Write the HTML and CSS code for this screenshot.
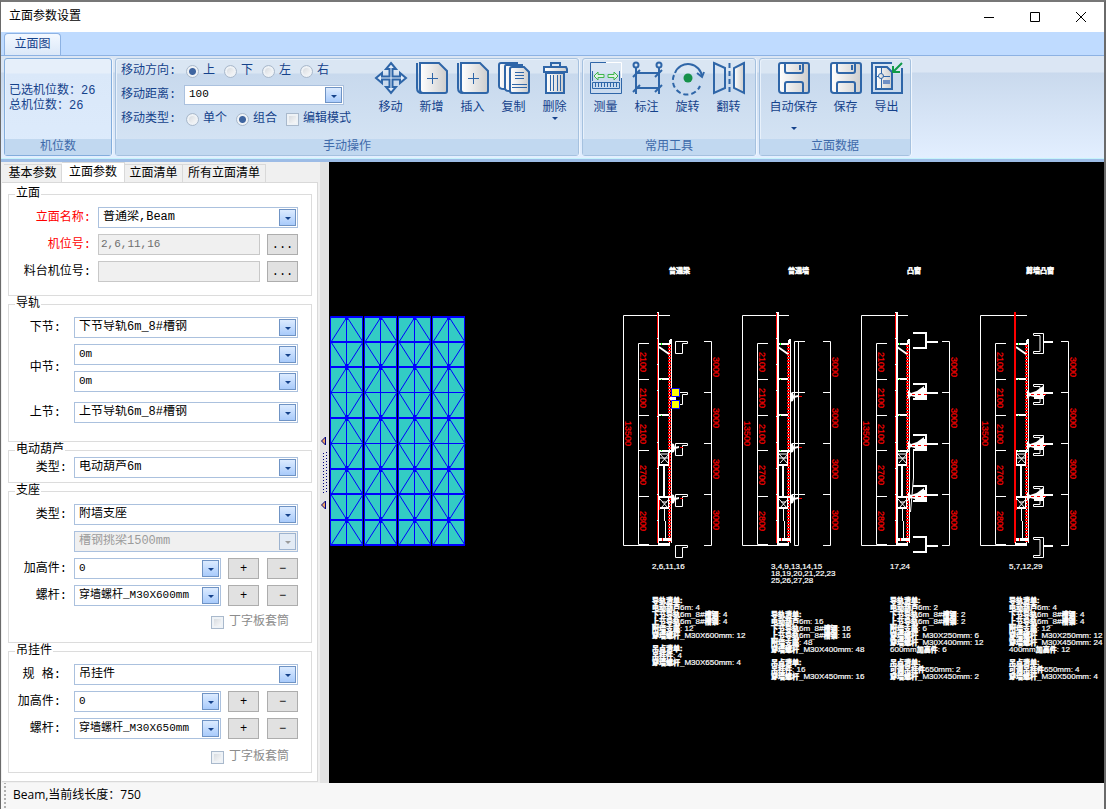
FILE: index.html
```html
<!DOCTYPE html>
<html lang="zh-CN">
<head>
<meta charset="utf-8">
<title>立面参数设置</title>
<link rel="stylesheet" href="styles.css">
</head>
<body>
<div class="window">
  <header class="titlebar">
    <h1 class="title">立面参数设置</h1>
    <div class="controls">
      <button class="control" type="button" aria-label="最小化"><svg width="12" height="12" viewBox="0 0 12 12"><path d="M1 6.500h10"/></svg></button>
      <button class="control" type="button" aria-label="最大化"><svg width="12" height="12" viewBox="0 0 12 12"><path d="M1.500 1.500h9v9h-9z"/></svg></button>
      <button class="control" type="button" aria-label="关闭"><svg width="12" height="12" viewBox="0 0 12 12"><path d="M1 1l10 10M11 1L1 11"/></svg></button>
    </div>
  </header>

  <nav class="ribbon-tabs"><button class="ribbon-tab" type="button">立面图</button></nav>

  <section class="ribbon">
    <div class="group group-count">
      <div class="group-body counts"><p>已选机位数：26</p><p>总机位数：26</p></div>
      <h2 class="caption">机位数</h2>
    </div>

    <div class="group group-manual">
      <div class="group-body">
        <div class="options">
          <div class="option-row" role="radiogroup" aria-label="移动方向">
            <span class="option-name">移动方向:</span>
            <label class="choice"><input type="radio" name="dir" checked>上</label>
            <label class="choice"><input type="radio" name="dir">下</label>
            <label class="choice"><input type="radio" name="dir">左</label>
            <label class="choice"><input type="radio" name="dir">右</label>
          </div>
          <div class="option-row">
            <label class="option-name" for="distance">移动距离:</label>
            <span class="combo combo-distance"><select id="distance" class="latin"><option>100</option></select></span>
          </div>
          <div class="option-row" role="radiogroup" aria-label="移动类型">
            <span class="option-name">移动类型:</span>
            <label class="choice"><input type="radio" name="kind">单个</label>
            <label class="choice"><input type="radio" name="kind" checked>组合</label>
            <label class="choice"><input type="checkbox">编辑模式</label>
          </div>
        </div>
        <div class="tools">
          <button class="tool" type="button">
            <svg class="icon" viewBox="0 0 32 32"><path class="fill" d="M16 1l5 6h-3.500v7.500H25V11l6 5-6 5v-3.500h-7.500V25H21l-5 6-5-6h3.500v-7.500H7V21l-6-5 6-5v3.500h7.500V7H11z"/></svg>移动</button>
          <button class="tool" type="button">
            <svg class="icon" viewBox="0 0 32 32"><use href="#page-plus"/></svg>新增</button>
          <button class="tool" type="button">
            <svg class="icon" viewBox="0 0 32 32"><use href="#page-plus"/></svg>插入</button>
          <button class="tool" type="button">
            <svg class="icon" viewBox="0 0 32 32"><path class="metal" d="M3 1h16v26H6q-5 0-5-3V3q0-2 2-2z"/><path class="metal" d="M8 3h16v26h-13q-4 0-4-3V5q0-2 1-2z"/><path class="metal" d="M14 5h12l5 5v19q0 2-2 2H14q-2 0-2-2V7q0-2 2-2z"/><path class="fine" d="M17 10.500h9M17 13.500h9M17 16.500h9M14 22.500h15M14 25.500h15"/></svg>复制</button>
          <button class="tool" type="button">
            <svg class="icon" viewBox="0 0 32 32"><path class="metal" d="M7 11h18v20H7z"/><path class="metal" d="M5 5h22l1 2v3H5V7z"/><path d="M12 5V1h9v4"/><path class="fine" d="M11.500 13v16M14.500 13v16M18.500 13v16M21.500 13v16"/></svg>删除<i class="drop"></i></button>
        </div>
      </div>
      <h2 class="caption">手动操作</h2>
    </div>

    <div class="group group-common">
      <div class="group-body">
        <div class="tools">
          <button class="tool" type="button">
            <svg class="icon" viewBox="0 0 32 32"><path class="fine" d="M16 .5H.500v31h31V16"/><path class="shine" d="M16 .5h15.500V16"/><path class="fine" d="M2.500 9v10M29.500 9v10"/><path class="green" d="M4 14l4-4v2.500h6v3H8V18zM28 14l-4-4v2.500h-6v3h6V18z"/><path class="band" d="M2.500 20.500h27v6h-27z"/><path class="fine" d="M5.500 21v4M8.500 21v4M11.500 21v4M14.500 21v4M17.500 21v4M20.500 21v4M23.500 21v4M26.500 21v4"/></svg>测量</button>
          <button class="tool" type="button">
            <svg class="icon" viewBox="0 0 32 32"><circle cx="5" cy="3" r="2.500"/><circle cx="28" cy="3" r="2.500"/><path d="M5 6v26M28 6v26M5 11h23M5 26h23M2 15l7-7M24 15l7-7M2 30l7-7M24 30l7-7"/></svg>标注</button>
          <button class="tool" type="button">
            <svg class="icon" viewBox="0 0 32 32"><path d="M3 11A14 14 0 0 1 30 15"/><path d="M25 11l5 4 2-5"/><path class="dashed" d="M2 13A14 14 0 0 0 28 24"/><circle class="dot" cx="16" cy="16" r="4.500"/></svg>旋转</button>
          <button class="tool" type="button">
            <svg class="icon" viewBox="0 0 32 32"><path d="M1 1l11 5v20L1 31z"/><path class="metal" d="M31 1L21 6v20l10 5z"/><path class="dashed" d="M16.500 1v30"/></svg>翻转</button>
        </div>
      </div>
      <h2 class="caption">常用工具</h2>
    </div>

    <div class="group group-data">
      <div class="group-body">
        <div class="tools">
          <button class="tool tool-wide" type="button">
            <svg class="icon" viewBox="0 0 32 32"><use href="#floppy"/></svg>自动保存<i class="drop drop-low"></i></button>
          <button class="tool" type="button">
            <svg class="icon" viewBox="0 0 32 32"><use href="#floppy"/></svg>保存</button>
          <button class="tool" type="button">
            <svg class="icon" viewBox="0 0 32 32"><path d="M21 1H1v30h30V6"/><path class="metal" d="M5 5h11l5 5v17H5z"/><path class="fine" d="M5 14.500h14M10.500 5v22"/><circle class="metal fine" cx="10" cy="14" r="2.500"/><path class="solid" d="M12 18h7v4h-7z"/><path class="arrow" d="M31 1l-9 9M22 4v6h7"/></svg>导出</button>
        </div>
      </div>
      <h2 class="caption">立面数据</h2>
    </div>
  </section>

  <main class="main">
    <aside class="sidebar">
      <div class="tabs" role="tablist">
        <button class="tab" type="button" role="tab">基本参数</button>
        <button class="tab tab-active" type="button" role="tab" aria-selected="true">立面参数</button>
        <button class="tab" type="button" role="tab">立面清单</button>
        <button class="tab tab-long" type="button" role="tab">所有立面清单</button>
      </div>
      <form class="page">
        <fieldset class="box box-facade">
          <legend>立面</legend>
          <div class="row"><label class="name required" for="facade">立面名称:</label><span class="combo"><select id="facade"><option>普通梁,Beam</option></select></span></div>
          <div class="row"><label class="name required" for="seat">机位号:</label><input id="seat" class="text latin" type="text" value="2,6,11,16" disabled><button class="small" type="button" aria-label="选择机位号">...</button></div>
          <div class="row"><label class="name" for="dock">料台机位号:</label><input id="dock" class="text latin" type="text" disabled><button class="small" type="button" aria-label="选择料台机位号">...</button></div>
        </fieldset>

        <fieldset class="box box-rail">
          <legend>导轨</legend>
          <div class="row"><label class="name" for="lower">下节:</label><span class="combo"><select id="lower"><option>下节导轨6m_8#槽钢</option></select></span></div>
          <div class="row row-tall"><label class="name" for="mid">中节:</label><div class="stack"><span class="combo"><select id="mid" class="latin"><option>0m</option></select></span><span class="combo"><select class="latin" aria-label="中节二"><option>0m</option></select></span></div></div>
          <div class="row"><label class="name" for="upper">上节:</label><span class="combo"><select id="upper"><option>上节导轨6m_8#槽钢</option></select></span></div>
        </fieldset>

        <fieldset class="box box-hoist">
          <legend>电动葫芦</legend>
          <div class="row"><label class="name" for="hoist">类型:</label><span class="combo"><select id="hoist"><option>电动葫芦6m</option></select></span></div>
        </fieldset>

        <fieldset class="box box-support">
          <legend>支座</legend>
          <div class="row"><label class="name" for="support">类型:</label><span class="combo"><select id="support"><option>附墙支座</option></select></span></div>
          <div class="row"><span class="name"></span><span class="combo combo-off"><select aria-label="挑梁" disabled><option>槽钢挑梁1500mm</option></select></span></div>
          <div class="row"><label class="name" for="raise1">加高件:</label><span class="combo"><select id="raise1" class="latin"><option>0</option></select></span><button class="small" type="button">+</button><button class="small" type="button">−</button></div>
          <div class="row"><label class="name" for="screw1">螺杆:</label><span class="combo"><select id="screw1" class="latin"><option>穿墙螺杆_M30X600mm</option></select></span><button class="small" type="button">+</button><button class="small" type="button">−</button></div>
          <label class="sleeve"><input type="checkbox" disabled>丁字板套筒</label>
        </fieldset>

        <fieldset class="box box-hanger">
          <legend>吊挂件</legend>
          <div class="row"><label class="name" for="hanger">规&nbsp;格:</label><span class="combo"><select id="hanger"><option>吊挂件</option></select></span></div>
          <div class="row"><label class="name" for="raise2">加高件:</label><span class="combo"><select id="raise2" class="latin"><option>0</option></select></span><button class="small" type="button">+</button><button class="small" type="button">−</button></div>
          <div class="row"><label class="name" for="screw2">螺杆:</label><span class="combo"><select id="screw2" class="latin"><option>穿墙螺杆_M30X650mm</option></select></span><button class="small" type="button">+</button><button class="small" type="button">−</button></div>
          <label class="sleeve sleeve-low"><input type="checkbox" disabled>丁字板套筒</label>
        </fieldset>
      </form>
    </aside>

    <div class="splitter">
      <svg width="9" height="80" viewBox="0 0 9 80"><path class="tip" d="M5.500 4v8L1.500 8zM5.500 68v8L1.500 72z"/><path class="grip" d="M3.500 20v42M6.500 19v42"/></svg>
    </div>

    <div class="canvas">
      <svg class="drawing" viewBox="329 162 775 620" preserveAspectRatio="xMinYMin meet">
        <defs>
          <g id="panel">
            <path class="teal" d="M331 317h32v228h-32z"/>
            <path class="blue" d="M347 317L331 342l16 25-16 25.500 16 25.500-16 25.500 16 25.500-16 25.500 16 25.500-16 25M347 317l16 25-16 25 16 25.500-16 25.500 16 25.500-16 25.500 16 25.500-16 25.500 16 25M346.500 317v228M331 392.500h32M331 443.500h32"/>
            <path class="blue" d="M330.500 316.500h32v229h-32z"/>
            <path class="blue thick" d="M331 317h32M331 342h32M331 367h32M331 418h32M331 469h32M331 494h32M331 520h32M331 545h32"/>
            <path class="knots" d="M345 317h3v3h-3zM345 364h3v6h-3zM345 415h3v6h-3zM345 466h3v6h-3zM345 517h3v6h-3z"/>
          </g>
          <g id="unit">
            <path class="line" d="M670 315.500h-46.500v230H670M649 343.500h-10.500v201H649M638.500 379.500H649M638.500 415.500H649M638.500 450.500H649M638.500 496.500H649"/>
            <path class="line" d="M704 341.500h7.500v204H704M704 392.500h7.500M704 443.500h7.500M704 494.500h7.500"/>
            <path class="line" d="M658.500 312v231M671.500 339v204M670.500 339v5"/>
            <path class="redline" d="M657.500 312v231"/>
            <path class="line sparse" d="M657.500 312v231"/>
            <path class="line" d="M669.500 340v203"/>
            <path class="rail" d="M669.500 345v197"/>
            <path class="line thick" d="M658 344h11M658 379h11M658 415h11M658 451h13M658 497h13M658 465h11M658 508h11M658 544h12"/>
            <path class="line thick" d="M659 347l10 7M664 466v31"/>
            <path class="line" d="M659.500 451v14M668.500 451v14M659.500 497v11M668.500 497v11M660 454h9l-8 9M660 454l9 10M660 458h9M660 499l8 9M669 499l-8 9M662 502h5M664.500 509v12M665.500 521v18M671.500 443v33M671.500 496v31"/>
            <path class="line block" d="M658 539.500h13"/>
            <path class="redline" d="M662.500 538v3M669.500 453v12M659.500 500v10"/>
            <path class="greens" d="M661 343h1v2h-1zM661 379h1v1h-1zM661 415h1v1h-1zM661 450h1v1h-1z"/>
            <g class="dim">
              <text transform="translate(640 352) rotate(90)">2100</text>
              <text transform="translate(640 388) rotate(90)">2100</text>
              <text transform="translate(640 424) rotate(90)">2100</text>
              <text transform="translate(640 465) rotate(90)">2700</text>
              <text transform="translate(640 511) rotate(90)">2800</text>
              <text transform="translate(625 421) rotate(90)">13500</text>
              <text transform="translate(713 357) rotate(90)">3000</text>
              <text transform="translate(713 408) rotate(90)">3000</text>
              <text transform="translate(713 459) rotate(90)">3000</text>
              <text transform="translate(713 510) rotate(90)">3000</text>
            </g>
          </g>
          <path id="beam" class="line" d="M675.500 341.500h12v2h-5v10h-7z"/>
          <g id="shoe"><path class="white" d="M671 443l3 1 1 3 4-1v2l-4 1-1 3-3 1z"/><path class="redline" d="M680 447.500h3"/></g>
          <path id="bay" class="line thick" d="M913 333h13v15h-13M927 342h11"/>
          <path id="ledge" class="line" d="M1033.500 335v-1.500h10v20h-10v-2h6.500V335.500h-6.500M1043 341.500h10M1043 342.500h10"/>
          <g id="strut"><path class="white" d="M908 390l3 3 6-2 7-5v2h1v6h1v2h-1v3h-10v-2l-4-1-3 3z"/><path class="redline dotted" d="M912 394.500h16"/></g>
          <g id="page-plus"><path class="metal" d="M4 1h19l8 8v20q0 2-2 2H7q-3 0-3-3z"/><path d="M1 1v25q0 5 5 5"/><path class="mid" d="M16.500 11v11M11 16.500h11"/></g>
          <g id="floppy"><path class="metal" d="M3 1h26q2 0 2 2v26q0 2-2 2H4q-3 0-3-3V3q0-2 2-2z"/><path d="M7 1v8q0 2 2 2h14q2 0 2-2V1M22 3v5M7 31v-9q0-2 2-2h14q2 0 2 2v9"/></g>
          <linearGradient id="steel"><stop offset="0" stop-color="#fff"/><stop offset="1" stop-color="#cdcdcd"/></linearGradient>
        </defs>

        <use href="#panel"/><use href="#panel" x="34"/><use href="#panel" x="68"/><use href="#panel" x="102"/>

        <use href="#unit"/><use href="#unit" x="119"/><use href="#unit" x="238"/><use href="#unit" x="357"/>
        <path class="line" d="M778.500 312v231M897.500 312v231"/>
        <path class="redline thick" d="M1015 312v230"/>

        <use href="#beam"/><use href="#beam" y="51"/><use href="#beam" y="102"/><use href="#beam" y="153"/><use href="#beam" y="204"/>
        <use href="#shoe"/><use href="#shoe" y="51"/>
        <path class="white" d="M670 397h5v3h-5z"/>
        <path class="handle" d="M671.500 388.500h8v8h-8zM671.500 400.500h8v8h-8z"/>

        <path class="line" d="M805 341.500h-10.500v204h4v-204M792 392.500h13M792 443.500h13M792 494.500h13"/>
        <use href="#shoe" x="119" y="-51"/><use href="#shoe" x="119"/><use href="#shoe" x="119" y="51"/>

        <use href="#bay"/><use href="#bay" y="51"/><use href="#bay" y="102"/><use href="#bay" y="153"/><use href="#bay" y="204"/>
        <use href="#strut"/><use href="#strut" y="51"/><use href="#strut" y="102"/>
        <path class="line" d="M913.500 450v28l-3 34"/>

        <use href="#ledge"/><use href="#ledge" y="51"/><use href="#ledge" y="102"/><use href="#ledge" y="153"/><use href="#ledge" y="204"/>
        <use href="#strut" x="119"/><use href="#strut" x="119" y="51"/><use href="#strut" x="119" y="102"/>

        <g class="heads">
          <text x="669" y="273">普通梁</text><text x="788" y="273">普通墙</text><text x="907" y="273">凸窗</text><text x="1026" y="273">剪墙凸窗</text>
        </g>
        <g class="notes">
          <text x="652" y="569">2,6,11,16</text>
          <text><tspan x="771" y="569">3,4,9,13,14,15</tspan><tspan x="771" y="576">18,19,20,21,22,23</tspan><tspan x="771" y="583">25,26,27,28</tspan></text>
          <text x="890" y="569">17,24</text>
          <text x="1009" y="569">5,7,12,29</text>

          <text x="652" y="603"><tspan class="han">导轨清单:</tspan></text>
          <text x="652" y="610"><tspan class="han">电动葫芦</tspan>6m: 4</text>
          <text x="652" y="617"><tspan class="han">下节导轨</tspan>6m_8#<tspan class="han">槽钢</tspan>: 4</text>
          <text x="652" y="624"><tspan class="han">上节导轨</tspan>6m_8#<tspan class="han">槽钢</tspan>: 4</text>
          <text x="652" y="631"><tspan class="han">附墙支座</tspan>: 12</text>
          <text x="652" y="638"><tspan class="han">穿墙螺杆</tspan>_M30X600mm: 12</text>
          <text x="652" y="651"><tspan class="han">吊点清单:</tspan></text>
          <text x="652" y="658"><tspan class="han">吊挂件</tspan>: 4</text>
          <text x="652" y="665"><tspan class="han">穿墙螺杆</tspan>_M30X650mm: 4</text>

          <text x="771" y="617"><tspan class="han">导轨清单:</tspan></text>
          <text x="771" y="624"><tspan class="han">电动葫芦</tspan>6m: 16</text>
          <text x="771" y="631"><tspan class="han">下节导轨</tspan>6m_8#<tspan class="han">槽钢</tspan>: 16</text>
          <text x="771" y="638"><tspan class="han">上节导轨</tspan>6m_8#<tspan class="han">槽钢</tspan>: 16</text>
          <text x="771" y="645"><tspan class="han">附墙支座</tspan>: 48</text>
          <text x="771" y="652"><tspan class="han">穿墙螺杆</tspan>_M30X400mm: 48</text>
          <text x="771" y="665"><tspan class="han">吊点清单:</tspan></text>
          <text x="771" y="672"><tspan class="han">吊挂件</tspan>: 16</text>
          <text x="771" y="679"><tspan class="han">穿墙螺杆</tspan>_M30X450mm: 16</text>

          <text x="890" y="603"><tspan class="han">导轨清单:</tspan></text>
          <text x="890" y="610"><tspan class="han">电动葫芦</tspan>6m: 2</text>
          <text x="890" y="617"><tspan class="han">下节导轨</tspan>6m_8#<tspan class="han">槽钢</tspan>: 2</text>
          <text x="890" y="624"><tspan class="han">上节导轨</tspan>6m_8#<tspan class="han">槽钢</tspan>: 2</text>
          <text x="890" y="631"><tspan class="han">附墙支座</tspan>: 6</text>
          <text x="890" y="638"><tspan class="han">穿墙螺杆</tspan>_M30X250mm: 6</text>
          <text x="890" y="645"><tspan class="han">穿墙螺杆</tspan>_M30X400mm: 12</text>
          <text x="890" y="652">600mm<tspan class="han">加高件</tspan>: 6</text>
          <text x="890" y="665"><tspan class="han">吊点清单:</tspan></text>
          <text x="890" y="672"><tspan class="han">可调吊挂件</tspan>650mm: 2</text>
          <text x="890" y="679"><tspan class="han">穿墙螺杆</tspan>_M30X450mm: 2</text>

          <text x="1009" y="603"><tspan class="han">导轨清单:</tspan></text>
          <text x="1009" y="610"><tspan class="han">电动葫芦</tspan>6m: 4</text>
          <text x="1009" y="617"><tspan class="han">下节导轨</tspan>6m_8#<tspan class="han">槽钢</tspan>: 4</text>
          <text x="1009" y="624"><tspan class="han">上节导轨</tspan>6m_8#<tspan class="han">槽钢</tspan>: 4</text>
          <text x="1009" y="631"><tspan class="han">附墙支座</tspan>: 12</text>
          <text x="1009" y="638"><tspan class="han">穿墙螺杆</tspan>_M30X250mm: 12</text>
          <text x="1009" y="645"><tspan class="han">穿墙螺杆</tspan>_M30X450mm: 24</text>
          <text x="1009" y="652">400mm<tspan class="han">加高件</tspan>: 12</text>
          <text x="1009" y="665"><tspan class="han">吊点清单:</tspan></text>
          <text x="1009" y="672"><tspan class="han">可调吊挂件</tspan>650mm: 4</text>
          <text x="1009" y="679"><tspan class="han">穿墙螺杆</tspan>_M30X500mm: 4</text>
        </g>
      </svg>
    </div>
  </main>

  <footer class="status">Beam,当前线长度：750</footer>
</div>
</body>
</html>
```

FILE: styles.css
```css
* { box-sizing: border-box; }

body {
  margin: 0;
  font: 12px/14px "Liberation Mono", "Noto Sans CJK SC", monospace;
  color: #000;
}

button, input, select { font: inherit; color: inherit; margin: 0; }
button { border: 0; padding: 0; background: none; }
h1, h2, p { margin: 0; font-size: 12px; font-weight: normal; }

.window {
  display: flex;
  flex-direction: column;
  min-height: 100vh;
  background: #f0f0f0;
  border: solid #6a6a6a;
  border-width: 2px 2px 0 1px;
  border-top-color: #777;
}

/* title bar */
.titlebar { display: flex; justify-content: space-between; height: 30px; background: #fff; }
.title { padding-left: 8px; line-height: 31px; }
.controls { display: flex; }
.control { width: 46px; display: flex; align-items: center; justify-content: center; }
.control svg { fill: none; stroke: #000; }

/* ribbon */
.ribbon-tabs { display: flex; align-items: flex-end; height: 23px; padding-left: 3px; background: #bfdbff; }
.ribbon-tab {
  width: 57px;
  height: 22px;
  border: 1px solid #8db2e3;
  border-bottom: 0;
  border-radius: 4px 4px 0 0;
  background: linear-gradient(#f3f8ff, #dbe8f8);
  color: #15428b;
}
.ribbon {
  display: flex;
  gap: 3px;
  height: 107px;
  padding: 2px 3px 3px;
  border-top: 1px solid #8db2e3;
  border-bottom: 3px solid #9dbce6;
  background: linear-gradient(#dbe6f4 0 16px, #c9d9ed 17px, #e3efff);
  box-shadow: inset 0 -1px #c5f3fb;
  color: #15428b;
}
.group {
  display: flex;
  flex-direction: column;
  border: 1px solid #a5c1df;
  border-radius: 3px;
  background: linear-gradient(#dae6f3 0 14px, #c8d9ed 15px, #d6e5f5);
  box-shadow: inset 1px 1px #e8f1fb, 1px 0 #f0f6fd;
}
.group-count { width: 108px; border-color: #83addc; background: linear-gradient(#e6effa 0 14px, #dae8f9 15px, #ddebfc); }
.group-manual { width: 464px; }
.group-common { width: 174px; }
.group-data { width: 152px; }
.group-body { display: flex; flex: 1; }
.caption { height: 16px; background: #c1d8f0; color: #3e6aaa; text-align: center; line-height: 16px; }
.counts { flex-direction: column; justify-content: center; padding: 0 4px; line-height: 15px; white-space: nowrap; }

.options { display: flex; flex-direction: column; gap: 4px; width: 254px; padding: 2px 5px; }
.option-row { display: flex; align-items: center; height: 20px; }
.option-name { width: 63px; white-space: nowrap; }
.choice { display: flex; align-items: center; gap: 4px; margin-right: 9px; white-space: nowrap; }
.option-name + .choice { margin-left: 2px; }

input[type="radio"], input[type="checkbox"] {
  appearance: none;
  width: 13px;
  height: 13px;
  border: 1px solid #a9b9cc;
  background: linear-gradient(135deg, #cfd4da, #fff);
  box-shadow: inset 0 0 0 2px #eef2f6;
}
input[type="radio"] { border-radius: 50%; }
input[type="radio"]:checked { background: radial-gradient(circle, #3f65a0 0 3px, #eef2f6 4px); box-shadow: none; }

.tools { display: flex; padding: 3px 2px; }
.group-manual .tools { padding-left: 0; }
.tool { display: flex; flex-direction: column; align-items: center; gap: 5px; width: 41px; white-space: nowrap; }
.tool-wide { width: 63px; }
.icon { width: 32px; height: 32px; margin-bottom: 2px; overflow: visible; fill: none; stroke: #2f66a8; stroke-width: 2; }
.fill { fill: #e4eefa; stroke-width: 2; }
.metal { fill: url(#steel); }
.icon .shine { stroke: #fff; stroke-width: 1; }
.green { stroke: #3fb54c; stroke-width: 1; fill: #dff2e4; }
.band { fill: #c6d9ef; stroke-width: 1; }
.fine, .mid { stroke-width: 1; }
.dashed { stroke-dasharray: 5 3; }
.dot { fill: #16914a; stroke: none; }
.solid { fill: #6f8fc4; stroke: none; }
.arrow { stroke: #119a48; }
.drop { margin-top: -3px; border: 3px solid transparent; border-top-color: #15428b; border-bottom: 0; }
.drop-low { margin-top: 7px; }

/* side panel */
.main { display: flex; flex: 1; }
.sidebar { display: flex; flex-direction: column; width: 319px; padding: 0 2px 1px 1px; }
.tabs { display: flex; align-items: flex-end; height: 20px; padding-left: 2px; }
.tab { width: 58px; height: 18px; border: 1px solid #d9d9d9; border-left: 0; border-bottom: 0; white-space: nowrap; }
.tab-active { width: 63px; height: 20px; background: #fff; }
.tab-long { width: 83px; }
.page {
  flex: 1;
  padding: 5px 5px 8px 6px;
  background: #fff;
  border: 1px solid #d9d9d9;
  border-left: 0;
}
.box { min-width: 0; margin: 0; padding: 7px 13px 0 0; border: 1px solid #dcdcdc; }
.box legend { height: 12px; margin-left: 6px; padding: 0 1px; line-height: 12px; }
.box-facade { height: 108px; margin-bottom: 2px; }
.box-rail { height: 144px; margin-bottom: 2px; }
.box-hoist { height: 39px; margin-bottom: 2px; padding-top: 1px; }
.box-support { height: 158px; margin-bottom: 2px; }
.box-hanger { height: 128px; }

.row { display: flex; align-items: center; gap: 7px; margin-bottom: 6px; }
.name { width: 58px; text-align: right; white-space: nowrap; }
.box-facade .name { width: 82px; }
.box-rail .name, .box-hanger .name { width: 52px; margin-right: 6px; }
.required { color: #f00; }
.row-tall { margin-bottom: 10px; }
.stack { display: flex; flex: 1; flex-direction: column; gap: 6px; }

.combo { position: relative; display: flex; flex: 1; height: 21px; min-width: 0; }
.stack .combo { flex: none; }
.combo select {
  appearance: none;
  width: 100%;
  padding: 0 16px 2px 4px;
  border: 1px solid #abc1de;
  border-radius: 0;
  background: #fff;
  color: #000;
}
.combo select.latin, .text.latin { font-size: 11px; }
.option-row .combo-distance { flex: none; width: 160px; height: 20px; }
.combo::before {
  content: "";
  position: absolute;
  top: 2px;
  right: 2px;
  bottom: 2px;
  width: 15px;
  border: 1px solid #6f93c4;
  background: linear-gradient(#dcebff, #a9cbfb);
  pointer-events: none;
}
.combo::after {
  content: "";
  position: absolute;
  top: 10px;
  right: 7px;
  border: 3px solid transparent;
  border-top-color: #15428b;
  border-bottom: 0;
  pointer-events: none;
}
.combo-off select { background: #f0f0f0; color: #9b9b9b; opacity: 1; }
.combo-off::before { border-color: #9db3cf; background: #e3ebf5; }
.combo-off::after { border-top-color: #9b9b9b; }
.text { flex: 1; min-width: 0; height: 21px; padding: 0 2px 2px; border: 1px solid #c8c8c8; background: #f0f0f0; color: #6d6d6d; }
.small { width: 31px; height: 21px; border: 1px solid #adadad; background: #e1e1e1; }
.small + .small { margin-left: 1px; }
.sleeve { display: flex; align-items: center; justify-content: flex-end; gap: 5px; margin-top: 9px; padding-right: 9px; color: #8c8c8c; }
.sleeve-low { margin-top: 11px; }

.splitter { display: flex; align-items: center; width: 9px; background: #e3e3e3; }
.tip { fill: #f0a060; stroke: #00007f; }
.grip { fill: none; stroke: #00007f; stroke-dasharray: 1 2; }

/* drawing */
.canvas { flex: 1; min-width: 0; background: #000; }
.drawing { display: block; width: 100%; }
.teal { fill: #33ccc4; }
.blue { fill: none; stroke: #00f; stroke-width: 1; }
.knots { fill: #00f; }
.line { fill: none; stroke: #fff; stroke-width: 1; }
.redline { fill: none; stroke: #f00; stroke-width: 1; }
.line.thick, .blue.thick, .redline.thick { stroke-width: 2; }
.line.block { stroke-width: 3; }
.white { fill: #fff; }
.dotted { stroke-dasharray: 3 3; }
.sparse { stroke-dasharray: 1 25; }
.rail { fill: none; stroke: #f00; stroke-width: 3; stroke-dasharray: 2 1; }
.greens { fill: #0f0; }
.handle { fill: #ff0; stroke: #00f; }
.dim text { font: 9px "Liberation Sans", sans-serif; fill: #f00; stroke: #f00; stroke-width: 0.2; }
.heads text { font: bold 7px "Noto Sans CJK SC", sans-serif; fill: #fff; stroke: #fff; stroke-width: 0.5; }
.notes text { font: 8px "Liberation Sans", "Noto Sans CJK SC", sans-serif; fill: #fff; stroke: #fff; stroke-width: 0.2; }
.notes .han { font-size: 7px; font-weight: bold; stroke-width: 0.5; }

.status {
  height: 27px;
  padding-left: 12px;
  background: radial-gradient(#b0b0b0 1px, transparent 1px) 2px 6px / 4px 4px repeat-y, #f7f7f7;
  font: 12px/23px "Open Sans", "Noto Sans CJK SC", sans-serif;
}
```
